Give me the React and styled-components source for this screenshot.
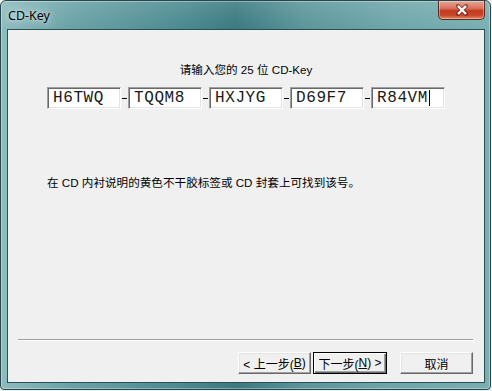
import React from "react";
import styled, { createGlobalStyle } from "styled-components";

const GlobalStyle = createGlobalStyle`
  html, body {
    margin: 0;
    padding: 0;
    background: #eef2f2;
  }
  body {
    font-family: "Noto Sans", "Noto Sans CJK SC", sans-serif;
  }
`;

const Window = styled.div`
  box-sizing: border-box;
  width: 491px;
  height: 390px;
  display: flex;
  flex-direction: column;
  padding: 0 5px 6px 6px;
  border: 1px solid #26484c;
  border-radius: 6px 6px 4px 4px;
  background:
    linear-gradient(180deg, rgba(255, 255, 255, 0.12), rgba(255, 255, 255, 0) 28px),
    linear-gradient(
      90deg,
      #8ebcbf 0%,
      #6aa3a7 14%,
      #4c8b90 36%,
      #3a7a80 48%,
      #5b969a 62%,
      #6ea6aa 80%,
      #7aafb2 100%
    );
  box-shadow: inset 0 0 0 1px rgba(255, 255, 255, 0.35);
`;

const TitleBar = styled.div`
  height: 28px;
  display: flex;
  align-items: flex-start;
  justify-content: space-between;
  flex-shrink: 0;
`;

const Title = styled.span`
  margin-top: 6px;
  padding-left: 1px;
  font-size: 12.5px;
  color: #000;
  text-shadow: 0 0 8px rgba(255, 255, 255, 0.9), 0 0 3px rgba(255, 255, 255, 0.6);
`;

const CloseButton = styled.div`
  box-sizing: border-box;
  width: 47px;
  height: 19px;
  display: flex;
  align-items: center;
  justify-content: center;
  border: 1px solid #5b2a22;
  border-top: none;
  border-radius: 0 0 5px 5px;
  background: linear-gradient(
    180deg,
    #e6a596 0%,
    #d9735e 40%,
    #c2381f 55%,
    #c94a2c 80%,
    #e08a5e 100%
  );
  box-shadow: inset 0 0 0 1px rgba(255, 255, 255, 0.35);
`;

const Client = styled.div`
  flex: 1;
  display: flex;
  flex-direction: column;
  border: 1px solid #2c4f53;
  background: #f0f0f0;
  font-family: "Liberation Sans", "Noto Sans CJK SC", sans-serif;
  font-size: 11.6px;
  color: #000;
`;

const Prompt = styled.div`
  margin-top: 32px;
  text-align: center;
  line-height: 16px;
`;

const KeyRow = styled.div`
  margin-top: 9px;
  display: flex;
  justify-content: center;
  align-items: center;
`;

const KeyField = styled.div`
  box-sizing: border-box;
  width: 74px;
  height: 22px;
  display: flex;
  align-items: center;
  padding-left: 5px;
  background: #fff;
  border-style: solid;
  border-width: 1px;
  border-color: #a0a0a0 #ffffff #ffffff #a0a0a0;
  box-shadow: inset 1px 1px 0 #696969, inset -1px -1px 0 #e3e3e3;
  font-family: "Liberation Mono", monospace;
  font-size: 16px;
  letter-spacing: 0.6px;
  color: #1a1a1a;
`;

const Caret = styled.span`
  display: inline-block;
  width: 1px;
  height: 16px;
  margin-left: 1px;
  background: #000;
`;

const Dash = styled.span`
  width: 5px;
  height: 1px;
  margin: 0 1px;
  background: #000;
`;

const Note = styled.div`
  margin-top: 66px;
  padding-left: 39px;
  line-height: 16px;
`;

const Spacer = styled.div`
  flex: 1;
`;

const Separator = styled.div`
  margin: 0 11px 0 10px;
  height: 1px;
  background: #a0a0a0;
  border-bottom: 1px solid #fff;
`;

const ButtonRow = styled.div`
  display: flex;
  justify-content: flex-end;
  gap: 2px;
  margin: 11px 11px 8px 0;
`;

const Button = styled.div`
  box-sizing: border-box;
  width: ${(p) => (p.$wide ? 74 : 73)}px;
  height: 22px;
  margin-left: ${(p) => (p.$apart ? 11 : 0)}px;
  display: flex;
  align-items: center;
  justify-content: center;
  background: #f0f0f0;
  border-style: solid;
  border-width: 1px;
  border-color: ${(p) =>
    p.$default ? "#000" : "#ffffff #696969 #696969 #ffffff"};
  box-shadow: ${(p) =>
    p.$default
      ? "inset 1px 1px 0 #fff, inset -1px -1px 0 #696969, inset -2px -2px 0 #a0a0a0"
      : "inset -1px -1px 0 #a0a0a0, inset 1px 1px 0 #e3e3e3"};
  font-size: 12px;
  white-space: pre;
`;

const CloseGlyph = () => (
  <svg width="14" height="12" viewBox="0 0 14 12">
    <path
      d="M3 2 L11 10 M11 2 L3 10"
      stroke="#4a1d16"
      strokeWidth="4"
      strokeLinecap="round"
      opacity="0.55"
    />
    <path d="M3 2 L11 10 M11 2 L3 10" stroke="#fff" strokeWidth="2.2" />
  </svg>
);

const keys = ["H6TWQ", "TQQM8", "HXJYG", "D69F7", "R84VM"];

export default function App() {
  return (
    <>
      <GlobalStyle />
      <Window>
        <TitleBar>
          <Title>CD-Key</Title>
          <CloseButton>
            <CloseGlyph />
          </CloseButton>
        </TitleBar>
        <Client>
          <Prompt>请输入您的 25 位 CD-Key</Prompt>
          <KeyRow>
            {keys.map((k, i) => (
              <React.Fragment key={k}>
                {i > 0 && <Dash />}
                <KeyField>
                  {k}
                  {i === keys.length - 1 && <Caret />}
                </KeyField>
              </React.Fragment>
            ))}
          </KeyRow>
          <Note>在 CD 内衬说明的黄色不干胶标签或 CD 封套上可找到该号。</Note>
          <Spacer />
          <Separator />
          <ButtonRow>
            <Button>
              {"< 上一步("}
              <u>B</u>
              {")"}
            </Button>
            <Button $default $wide>
              {"下一步("}
              <u>N</u>
              {") >"}
            </Button>
            <Button $apart>取消</Button>
          </ButtonRow>
        </Client>
      </Window>
    </>
  );
}
